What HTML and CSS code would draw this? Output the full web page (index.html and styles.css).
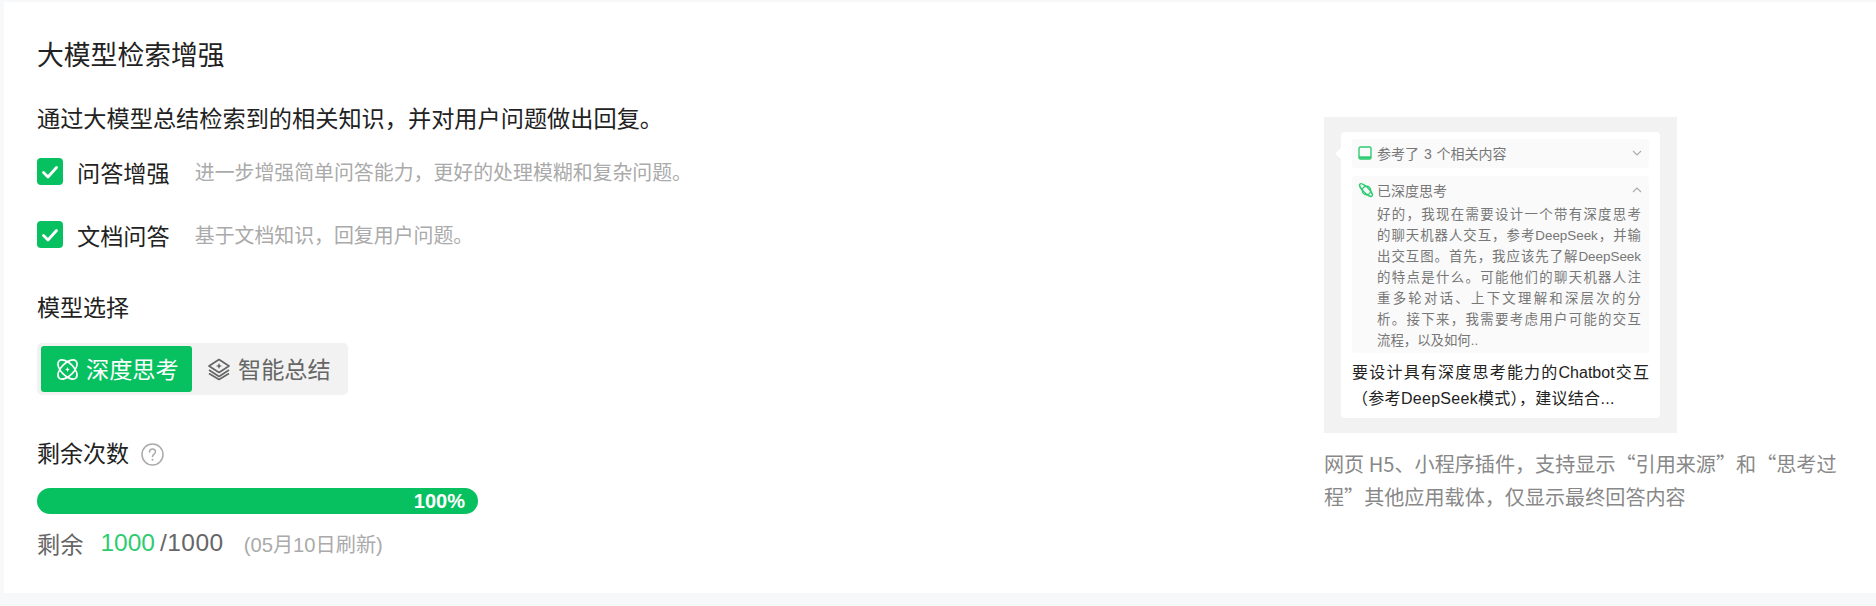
FILE: index.html
```html
<!DOCTYPE html>
<html lang="zh-CN">
<head>
    <meta charset="UTF-8">
    <meta name="viewport" content="width=device-width, initial-scale=1.0">
    <title>大模型检索增强</title>
    <link rel="stylesheet" href="styles.css">
</head>
<body>
    <div class="card">
        <div class="settings">
            <div class="title">大模型检索增强</div>
            <div class="intro">通过大模型总结检索到的相关知识，并对用户问题做出回复。</div>

            <div class="option first">
                <span class="check">
                    <svg viewBox="0 0 26 26" width="26" height="26"><path d="M6.500 13.500l4.500 4.500 8.500-9.500" fill="none" stroke="#fff" stroke-width="2.800" stroke-linecap="round" stroke-linejoin="round"/></svg>
                </span>
                <span class="optionName">问答增强</span>
                <span class="optionHint">进一步增强简单问答能力，更好的处理模糊和复杂问题。</span>
            </div>
            <div class="option second">
                <span class="check">
                    <svg viewBox="0 0 26 26" width="26" height="26"><path d="M6.500 13.500l4.500 4.500 8.500-9.500" fill="none" stroke="#fff" stroke-width="2.800" stroke-linecap="round" stroke-linejoin="round"/></svg>
                </span>
                <span class="optionName">文档问答</span>
                <span class="optionHint">基于文档知识，回复用户问题。</span>
            </div>

            <div class="label modelLabel">模型选择</div>
            <div class="tabs">
                <div class="tab active">
                    <svg viewBox="0 0 24 24" width="23" height="23" fill="none" stroke="#fff" stroke-width="1.700">
                        <ellipse cx="12" cy="12" rx="12.500" ry="6.500" transform="rotate(45 12 12)"/>
                        <ellipse cx="12" cy="12" rx="12.500" ry="6.500" transform="rotate(-45 12 12)"/>
                        <path d="M12 9.500l.8 1.700 1.700.8-1.700.8-.8 1.700-.8-1.700-1.700-.8 1.700-.8z" fill="#fff" stroke="none"/>
                    </svg>
                    <span class="tabText">深度思考</span>
                </div>
                <div class="tab">
                    <svg viewBox="0 0 24 24" width="24" height="24" fill="none" stroke="#666" stroke-width="1.700" stroke-linejoin="round">
                        <path d="M12 2.500l10 6.500-10 6.500-10-6.500z"/>
                        <path d="M2 13l10 6.500 10-6.500"/>
                        <path d="M2 16.500l10 6 10-6"/>
                        <path d="M12 6l1 2.200 2.200 .8-2.200 .8-1 2.200-1-2.200-2.200-.8 2.200-.8z" fill="#666" stroke="none"/>
                    </svg>
                    <span class="tabText">智能总结</span>
                </div>
            </div>

            <div class="label quotaLabel">
                <span>剩余次数</span>
                <svg viewBox="0 0 23 23" width="23" height="23" fill="none" stroke="#aaa" stroke-width="1.500">
                    <circle cx="11.500" cy="11.500" r="10.500"/>
                    <path d="M8.500 9c0-4 6-4 6 0 0 2-3 2.200-3 4.500" stroke-linecap="round"/>
                    <circle cx="11.500" cy="16.800" r="1" fill="#aaa" stroke="none"/>
                </svg>
            </div>
            <div class="bar"><span>100%</span></div>
            <div class="quota">
                <span class="quotaWord">剩余</span>
                <span class="quotaUsed">1000</span>
                <span class="quotaAll">/1000</span>
                <span class="quotaDate">(05月10日刷新)</span>
            </div>
        </div>

        <div class="preview">
            <div class="shot">
                <div class="bubble">
                    <div class="fold refRow">
                        <svg class="foldIcon" viewBox="0 0 14 14" width="14" height="14" fill="none" stroke="#2ecc71" stroke-width="1.400">
                            <rect x="1" y="1" width="12" height="12" rx="1.500"/>
                            <path d="M1 11.500h12" stroke-width="2.400"/>
                        </svg>
                        <span class="foldText">参考了 3 个相关内容</span>
                        <svg class="arrow" viewBox="0 0 10 6" width="10" height="6"><path d="M1 1l4 4 4-4" fill="none" stroke="#aaa" stroke-width="1.100"/></svg>
                    </div>
                    <div class="fold thinkRow">
                        <div class="foldHead">
                            <svg class="foldIcon" viewBox="0 0 16 16" width="16" height="16" fill="none" stroke="#2ecc71" stroke-width="1.400">
                                <circle cx="8.500" cy="8.500" r="4.200"/>
                                <ellipse cx="8" cy="8" rx="8.500" ry="2.800" transform="rotate(45 8 8)"/>
                            </svg>
                            <span class="foldText thinkText">已深度思考</span>
                            <svg class="arrow" viewBox="0 0 10 6" width="10" height="6"><path d="M1 5l4-4 4 4" fill="none" stroke="#aaa" stroke-width="1.100"/></svg>
                        </div>
                        <div class="thought">
                            <span class="thoughtLine">好的，我现在需要设计一个带有深度思考</span>
                            <span class="thoughtLine">的聊天机器人交互，参考DeepSeek，并输</span>
                            <span class="thoughtLine">出交互图。首先，我应该先了解DeepSeek</span>
                            <span class="thoughtLine">的特点是什么。可能他们的聊天机器人注</span>
                            <span class="thoughtLine">重多轮对话、上下文理解和深层次的分</span>
                            <span class="thoughtLine">析。接下来，我需要考虑用户可能的交互</span>
                            <span class="thoughtEnd">流程，以及如何..</span>
                        </div>
                    </div>
                    <div class="answer">
                        <span class="thoughtLine">要设计具有深度思考能力的Chatbot交互</span>
                        <span class="thoughtEnd answerEnd">（参考DeepSeek模式），建议结合...</span>
                    </div>
                </div>
            </div>
            <p class="caption">网页 H5、小程序插件，支持显示“引用来源”和“思考过程”其他应用载体，仅显示最终回答内容</p>
        </div>
    </div>
</body>
</html>
```

FILE: styles.css
```css
* {
    box-sizing: border-box;
}
body {
    margin: 0;
    height: 606px;
    padding: 2px 0 13px 4px;
    background-color: #f7f8fa;
    font-family: "Liberation Sans", "Noto Sans CJK SC", sans-serif;
    color: #222;
}
.card {
    height: 100%;
    background-color: white;
    display: flex;
    justify-content: space-between;
}
.settings {
    padding: 34px 0 0 33px;
}
.title {
    font-size: 26.800px;
    line-height: 40px;
}
.intro {
    margin-top: 26px;
    font-size: 23.200px;
    line-height: 34px;
}
.option {
    display: flex;
    align-items: center;
    height: 27px;
}
.option.first {
    margin-top: 22px;
}
.option.second {
    margin-top: 36px;
}
.check {
    width: 26px;
    height: 27px;
    background-color: #07c160;
    border-radius: 4px;
    display: flex;
    align-items: center;
    justify-content: center;
}
.optionName {
    margin-left: 14px;
    font-size: 23.200px;
}
.optionHint {
    margin-left: 25px;
    font-size: 19.900px;
    color: #aaa;
}
.label {
    font-size: 23px;
    line-height: 34px;
}
.modelLabel {
    margin-top: 43px;
}
.tabs {
    margin-top: 18px;
    width: 311px;
    height: 52px;
    padding: 3px 4px;
    background-color: #f2f2f2;
    border-radius: 5px;
    display: flex;
}
.tab {
    width: 151px;
    display: flex;
    align-items: center;
    padding-left: 15px;
    gap: 7px;
    font-size: 23.200px;
    color: #666;
    border-radius: 3px;
}
.tab.active {
    background-color: #07c160;
    color: white;
}
.tabText {
    padding-bottom: 2px;
}
.quotaLabel {
    margin-top: 42px;
    display: flex;
    align-items: center;
    gap: 12px;
}
.bar {
    margin-top: 17px;
    width: 441px;
    height: 26px;
    background-color: #07c160;
    border-radius: 13px;
    color: white;
    font-size: 20px;
    font-weight: 700;
    line-height: 26px;
    text-align: right;
    padding-right: 13px;
}
.quota {
    margin-top: 13px;
    height: 34px;
    padding-bottom: 2px;
    display: flex;
    align-items: center;
    font-size: 23.200px;
    color: #666;
}
.quotaUsed {
    margin-left: 17px;
    font-size: 24.500px;
    color: #2ecc71;
}
.quotaAll {
    margin-left: 5px;
    font-size: 24.500px;
    letter-spacing: .5px;
}
.quotaDate {
    margin-left: 20px;
    font-size: 20.200px;
    color: #aaa;
}
.preview {
    width: 520px;
    margin-right: 32px;
    padding-top: 115px;
}
.shot {
    width: 353px;
    height: 316px;
    padding: 15px 17px;
    background-color: #f2f2f2;
}
.bubble {
    position: relative;
    height: 286px;
    padding: 7px 11px 0;
    background-color: white;
    border-radius: 4px;
}
.bubble::before {
    content: "";
    position: absolute;
    left: -4px;
    top: 17px;
    width: 9px;
    height: 9px;
    background-color: white;
    transform: rotate(45deg);
}
.fold {
    background-color: #fafafa;
    border-radius: 3px;
    font-size: 14px;
    color: #777;
}
.refRow {
    height: 29px;
    padding: 0 7px 2px 6px;
    display: flex;
    align-items: center;
}
.thinkRow {
    margin-top: 8px;
    height: 177px;
    padding: 0 7px 0 6px;
}
.foldHead {
    height: 27px;
    display: flex;
    align-items: center;
}
.foldIcon {
    flex-shrink: 0;
}
.foldText {
    margin-left: 5px;
    flex: 1;
    word-spacing: 1px;
}
.thinkText {
    margin-left: 3px;
}
.thought {
    margin: 1px 0 0 19px;
    width: 264px;
    font-size: 13.400px;
    line-height: 21px;
}
.thoughtLine {
    display: block;
    white-space: nowrap;
    text-align: justify;
    text-align-last: justify;
}
.thoughtEnd {
    display: block;
    white-space: nowrap;
}
.answer {
    margin-top: 7px;
    font-size: 16px;
    line-height: 26px;
    color: #222;
}
.answerEnd {
    letter-spacing: .3px;
}
.caption {
    margin: 14px 0 0;
    font-family: "Noto Sans CJK SC", sans-serif;
    font-size: 20.100px;
    line-height: 33px;
    color: #888;
}
```
